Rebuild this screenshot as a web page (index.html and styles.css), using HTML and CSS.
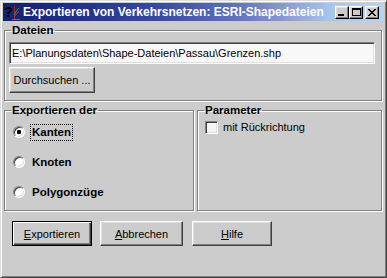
FILE: index.html
```html
<!DOCTYPE html>
<html lang="de">
<head>
  <meta charset="UTF-8" />
  <title>Exportieren von Verkehrsnetzen: ESRI-Shapedateien</title>
  <link rel="stylesheet" href="styles.css">
</head>
<body>
  <div class="window">
    <div class="titlebar">
      <svg class="app-icon" width="16" height="16" viewBox="0 0 16 16">
        <text x="0" y="13" font-family="Liberation Sans, Arial, sans-serif" font-weight="bold" font-size="14" fill="#000">?</text>
        <line x1="10.5" y1="2" x2="10.5" y2="15" stroke="#b02020" stroke-width="1"/>
        <polyline points="10,11 13,6 15,4" fill="none" stroke="#20a040" stroke-width="1"/>
        <polyline points="10,13 13,9 15,8" fill="none" stroke="#d03030" stroke-width="1"/>
        <line x1="8" y1="15.5" x2="16" y2="15.5" stroke="#20a040" stroke-width="1"/>
      </svg>
      <span class="title">Exportieren von Verkehrsnetzen: ESRI-Shapedateien</span>
      <div class="caption-buttons">
        <button class="cap"><span class="glyph-min"></span></button>
        <button class="cap"><span class="glyph-max"></span></button>
        <button class="cap cap-close">
          <svg width="8" height="7" viewBox="0 0 8 7">
            <path d="M0 0h2v1h1v1h2V1h1V0h2v1H7v1H6v1H5v1h1v1h1v1h1v1H6V6H5V5H3v1H2v1H0V6h1V5h1V4h1V3H2V2H1V1H0z" fill="#000"/>
          </svg>
        </button>
      </div>
    </div>

    <fieldset class="group files">
      <legend>Dateien</legend>
      <input class="field" type="text" value="E:\Planungsdaten\Shape-Dateien\Passau\Grenzen.shp">
      <button class="btn browse">Durchsuchen ...</button>
    </fieldset>

    <div class="options">
      <fieldset class="group export">
        <legend>Exportieren der</legend>
        <label class="radio-row"><span class="radio checked"></span><span class="radio-label focus">Kanten</span></label>
        <label class="radio-row"><span class="radio"></span><span class="radio-label">Knoten</span></label>
        <label class="radio-row"><span class="radio"></span><span class="radio-label">Polygonzüge</span></label>
      </fieldset>
      <fieldset class="group params">
        <legend>Parameter</legend>
        <label class="check-row"><span class="checkbox"></span><span class="check-label">mit Rückrichtung</span></label>
      </fieldset>
    </div>

    <div class="actions">
      <button class="btn action default"><u>E</u>xportieren</button>
      <button class="btn action cancel"><u>A</u>bbrechen</button>
      <button class="btn action help"><u>H</u>ilfe</button>
    </div>
  </div>
</body>
</html>
```

FILE: styles.css
```css
* {
  box-sizing: border-box;
}
body {
  margin: 0;
  background-color: #cccccc;
  font-family: "Liberation Sans", Arial, sans-serif;
  font-size: 11px;
  color: #000;
}
.window {
  width: 387px;
  height: 278px;
  padding: 2px;
  background-color: #cccccc;
  border: 1px solid;
  border-color: #dfdfdf #404040 #404040 #dfdfdf;
  box-shadow: inset 1px 1px #fff, inset -1px -1px #808080;
}

/* title bar */
.titlebar {
  display: flex;
  align-items: center;
  height: 18px;
  margin-bottom: 1px;
  padding: 0 5px 0 1px;
  background: linear-gradient(to right, #142070 0%, #24308a 20%, #3a4ca4 42%, #6474bc 62%, #8c9ad0 74%, #a6c6ec 86%, #b4d6f6 100%);
  color: #fff;
}
.app-icon {
  flex: none;
  margin-right: 3px;
}
.title {
  flex: 1;
  font-weight: bold;
  font-size: 12px;
  white-space: nowrap;
}
.caption-buttons {
  display: flex;
}
.cap {
  width: 14px;
  height: 13px;
  padding: 0;
  background-color: #cccccc;
  border: 1px solid;
  border-color: #fff #000 #000 #fff;
  box-shadow: inset -1px -1px #808080, inset 1px 1px #dfdfdf;
  display: flex;
  align-items: center;
  justify-content: center;
}
.cap-close {
  margin-left: 2px;
}
.glyph-min {
  width: 6px;
  height: 2px;
  background: #000;
  margin: 5px 2px 0 0;
}
.glyph-max {
  width: 9px;
  height: 8px;
  border: 1px solid #000;
  border-top-width: 2px;
}

/* group boxes */
.group {
  margin: 0;
  border: 1px solid #808080;
  box-shadow: inset 1px 1px #fff, 1px 1px #fff;
}
.group legend {
  margin-left: 2px;
  padding: 0 1px;
  font-weight: bold;
  font-size: 11.5px;
  line-height: 13px;
}
.files {
  margin: 3px 2px 0 1px;
  padding: 5px 4px 7px;
}
.field {
  display: block;
  width: 366px;
  height: 22px;
  padding: 0 2px;
  background-color: #f8f8f8;
  border: 1px solid;
  border-color: #808080 #fff #fff #808080;
  box-shadow: inset 1px 1px #404040, inset -1px -1px #dfdfdf;
  font: 11px "Liberation Sans", Arial, sans-serif;
  color: #000;
}
.btn {
  padding: 0;
  background-color: #cccccc;
  border: 1px solid;
  border-color: #fff #404040 #404040 #fff;
  box-shadow: inset -1px -1px #808080, inset 1px 1px #dfdfdf;
  font: 11px "Liberation Sans", Arial, sans-serif;
  color: #000;
}
.browse {
  display: block;
  width: 86px;
  height: 26px;
  margin-top: 3px;
}

.options {
  display: flex;
  gap: 3px;
  margin: 3px 2px 0 1px;
}
.export {
  width: 190px;
  padding: 0 4px 3px;
}
.params {
  flex: 1;
  padding: 0 4px 3px;
}
.radio-row {
  display: flex;
  align-items: center;
  height: 30px;
  font-weight: bold;
  font-size: 11.5px;
}
.radio {
  width: 12px;
  height: 12px;
  margin-left: 4px;
  border-radius: 50%;
  background: #fff;
  border: 1px solid;
  border-color: #808080 #fff #fff #808080;
  box-shadow: inset 1px 1px #404040, inset -1px -1px #dfdfdf;
}
.radio.checked {
  background: radial-gradient(circle, #000 0 2px, #fff 2.5px);
}
.radio-label {
  margin-left: 5px;
  padding: 1px;
  line-height: 13px;
  border: 1px dotted transparent;
}
.radio-label.focus {
  border-color: #000;
}
.check-row {
  display: flex;
  align-items: center;
  margin: 4px 0 0 3px;
}
.checkbox {
  width: 13px;
  height: 13px;
  background: #f4f4f4;
  border: 1px solid;
  border-color: #808080 #fff #fff #808080;
  box-shadow: inset 1px 1px #404040, inset -1px -1px #dfdfdf;
}
.check-label {
  margin-left: 5px;
  line-height: 13px;
}

/* dialog buttons */
.actions {
  display: flex;
  margin: 10px 0 0 9px;
}
.action {
  height: 25px;
  width: 80px;
}
.action u {
  text-underline-offset: 1px;
}
.default {
  border-color: #000;
  box-shadow: inset 1px 1px #fff, inset -1px -1px #404040, inset -2px -2px #808080;
}
.cancel {
  width: 83px;
  margin-left: 8px;
}
.help {
  margin-left: 9px;
}
```
